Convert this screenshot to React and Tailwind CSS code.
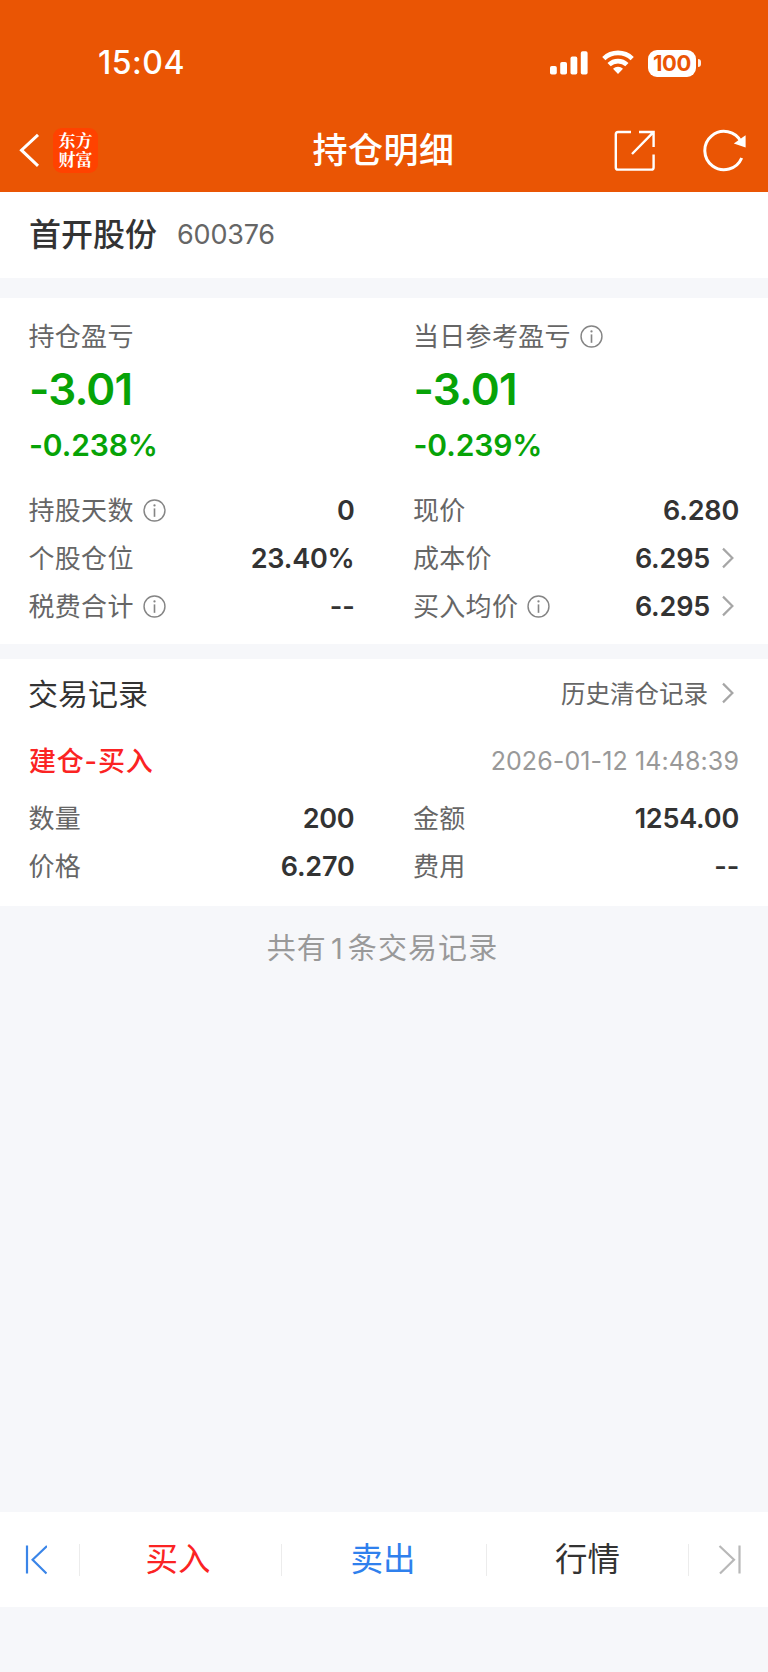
const INK = "text-[#333333]";

function InfoIcon() {
  return (
    <svg className="mb-0.5 ml-[9px] size-[23px] shrink-0" viewBox="0 0 24 24" fill="none" stroke="#858585" strokeWidth="1.5">
      <circle cx="12" cy="12" r="10.9" />
      <path d="M12 9.8V18.6" strokeWidth="1.7" />
      <circle cx="12" cy="6.7" r="1.2" fill="#858585" stroke="none" />
    </svg>
  );
}

function Chevron() {
  return (
    <svg className="mb-0.5 ml-2.5 mr-[3px] h-6 w-4 shrink-0" viewBox="0 0 16 24" fill="none" stroke="#a6a6a6" strokeWidth="2.2">
      <path d="M3 2.6L12.4 12L3 21.4" />
    </svg>
  );
}

function Label({ children, info }) {
  return (
    <div className="flex items-center">
      <span className="-ml-[0.5px] whitespace-nowrap text-[26px] leading-[48px] tracking-[0.3px] text-[#666666]">{children}</span>
      {info && <InfoIcon />}
    </div>
  );
}

function Row({ label, value, info, arrow }) {
  return (
    <div className="flex h-12 items-center justify-between">
      <Label info={info}>{label}</Label>
      <div className="flex items-center">
        <span className={`text-[27px] font-semibold leading-[48px] tracking-[-0.2px] ${INK}`}>{value}</span>
        {arrow && <Chevron />}
      </div>
    </div>
  );
}

function Profit({ label, info, amount, percent, children }) {
  return (
    <div>
      <Label info={info}>{label}</Label>
      <div className="-mt-px h-[58px] text-[44px] font-semibold leading-[58px] tracking-[-0.9px] text-[#07a307]">{amount}</div>
      <div className="mb-[15px] h-[54px] text-[30px] font-semibold leading-[54px] tracking-[-0.1px] text-[#07a307]">{percent}</div>
      {children}
    </div>
  );
}

function Header() {
  return (
    <header className="h-48 bg-[#ea5504] text-white">
      <div className="flex h-[108px] items-center pl-[98px] pr-[67px] pt-[18px]">
        <span className="text-[32px] font-medium leading-10 tracking-[0.5px]">15:04</span>
        <svg className="ml-auto h-[26px] w-[38px]" viewBox="0 0 38 26" fill="white">
          <rect x="0" y="16" width="6.8" height="8.6" rx="1.8" />
          <rect x="10.2" y="12" width="6.8" height="12.6" rx="1.8" />
          <rect x="20.5" y="6.6" width="6.8" height="18" rx="1.8" />
          <rect x="30.8" y="1.2" width="6.8" height="23.4" rx="1.8" />
        </svg>
        <svg className="ml-3.5 h-[26px] w-8" viewBox="0 0 32 26" fill="none" stroke="white" strokeWidth="4.6">
          <path d="M1.8 8.6A20.5 20.5 0 0 1 30.2 8.6" />
          <path d="M7.1 14.7A12.8 12.8 0 0 1 24.9 14.7" />
          <path d="M16 24L11 18.8A7.2 7.2 0 0 1 21 18.8Z" fill="white" stroke="none" />
        </svg>
        <div className="ml-[14px] flex h-[27px] w-12 items-center justify-center rounded-[9px] bg-white text-[22px] font-bold leading-[27px] tracking-[-0.4px] text-[#ea5504]">
          100
        </div>
        <div className="ml-0.5 h-2 w-[3px] rounded-r-full bg-white/90" />
      </div>
      <div className="grid h-[84px] grid-cols-3 items-center">
        <div className="flex items-center pl-[18px]">
          <svg className="h-9 w-[22px]" viewBox="0 0 22 36" fill="none" stroke="white" strokeWidth="3">
            <path d="M20 2.8L3.5 18.2L20 33.8" />
          </svg>
          <div className="ml-[13px] flex size-[45px] items-center justify-center rounded-[9px] bg-[#ff4200]">
            <p className="mb-[3px] w-[34px] break-all font-['Noto_Serif_CJK_SC','Noto_Sans_CJK_SC',serif] text-[17px] font-bold leading-[19px]">
              东方财富
            </p>
          </div>
        </div>
        <h1 className="-ml-px text-center text-[35px] font-medium leading-[60px] tracking-[0.5px]">持仓明细</h1>
        <div className="flex items-center justify-end pr-[21px]">
          <svg className="mt-0.5 size-[42px]" viewBox="0 0 42 42" fill="none" stroke="white" strokeWidth="2.4">
            <path d="M18 2H5Q2.8 2 2.8 4.2V37.4Q2.8 39.6 5 39.6H38.4Q40.6 39.6 40.6 37.4V24.5M26 2H40.6V17M40 2.6L19 24" />
          </svg>
          <svg className="ml-12 h-[44px] w-[44px]" viewBox="0 0 44 44" fill="none" stroke="white" strokeWidth="3">
            <path d="M38.7 30A19.2 19.2 0 1 1 38.2 14" />
            <path d="M30.8 15.6L42.6 7.2V19.6Z" fill="white" stroke="none" />
          </svg>
        </div>
      </div>
    </header>
  );
}

function BottomBar() {
  return (
    <nav className="flex h-[95px] items-center bg-white text-[32.5px] leading-[60px]">
      <div className="flex w-[79px] items-center pl-[23px]">
        <svg className="h-[30px] w-6" viewBox="0 0 24 30" fill="none" stroke="#3a85e8" strokeWidth="2.2">
          <path d="M4 0.5V28.5M24 1L9.6 14.7L23.5 28.5" />
        </svg>
      </div>
      <div className="h-8 w-px bg-[#ececec]" />
      <div className="w-[201px] pr-[5px] text-center text-[#fb2323]">买入</div>
      <div className="h-8 w-px bg-[#ececec]" />
      <div className="w-[204px] pr-[2px] text-center text-[#2f80ed]">卖出</div>
      <div className="h-8 w-px bg-[#ececec]" />
      <div className="w-[201px] text-center text-[#333333]">行情</div>
      <div className="h-8 w-px bg-[#ececec]" />
      <svg className="ml-[29px] h-[30px] w-6" viewBox="0 0 24 30" fill="none" stroke="#b8b8b8" strokeWidth="2.2">
        <path d="M21.5 0.5V28.5M1.5 1L16 14.7L2 28.5" />
      </svg>
    </nav>
  );
}

export default function App() {
  return (
    <div className="flex h-[1672px] w-[768px] flex-col overflow-hidden bg-[#f6f7fa] font-['Inter','Noto_Sans_CJK_SC',sans-serif]">
      <Header />
      <section className="flex h-[86px] items-center bg-white px-[29px]">
        <span className={`text-[32px] font-medium leading-[60px] ${INK}`}>首开股份</span>
        <span className="ml-5 text-[27px] leading-[60px] tracking-[-0.2px] text-[#666666]">600376</span>
      </section>
      <section className="mt-5 grid h-[346px] grid-cols-2 gap-x-[59px] bg-white px-[29px] pt-[15px]">
        <Profit label="持仓盈亏" amount="-3.01" percent="-0.238%">
          <Row label="持股天数" value="0" info />
          <Row label="个股仓位" value="23.40%" />
          <Row label="税费合计" value="--" info />
        </Profit>
        <Profit label="当日参考盈亏" amount="-3.01" percent="-0.239%" info>
          <Row label="现价" value="6.280" />
          <Row label="成本价" value="6.295" arrow />
          <Row label="买入均价" value="6.295" info arrow />
        </Profit>
      </section>
      <section className="mt-[15px] h-[247px] bg-white px-[29px]">
        <div className="flex h-[70px] items-center justify-between">
          <h2 className={`-ml-px text-[30px] leading-[60px] ${INK}`}>交易记录</h2>
          <div className="flex items-center">
            <span className="mr-0.5 text-[24.5px] leading-[48px] text-[#666666]">历史清仓记录</span>
            <Chevron />
          </div>
        </div>
        <div className="flex h-[63px] items-center justify-between pt-px">
          <span className="pt-px text-[27px] font-medium leading-[60px] tracking-[0.8px] text-[#fb2323]">建仓-买入</span>
          <span className="text-[25px] leading-[60px] tracking-[0.1px] text-[#999999]">2026-01-12 14:48:39</span>
        </div>
        <div className="mt-[3px] grid grid-cols-2 gap-x-[59px]">
          <Row label="数量" value="200" />
          <Row label="金额" value="1254.00" />
          <Row label="价格" value="6.270" />
          <Row label="费用" value="--" />
        </div>
      </section>
      <div className="flex-1 pr-[3px] pt-[13px] text-center text-[29px] leading-[60px] tracking-[1.1px] text-[#999999]">
        共有<span className="mx-1">1</span>条交易记录
      </div>
      <BottomBar />
      <div className="h-[65px]" />
    </div>
  );
}
